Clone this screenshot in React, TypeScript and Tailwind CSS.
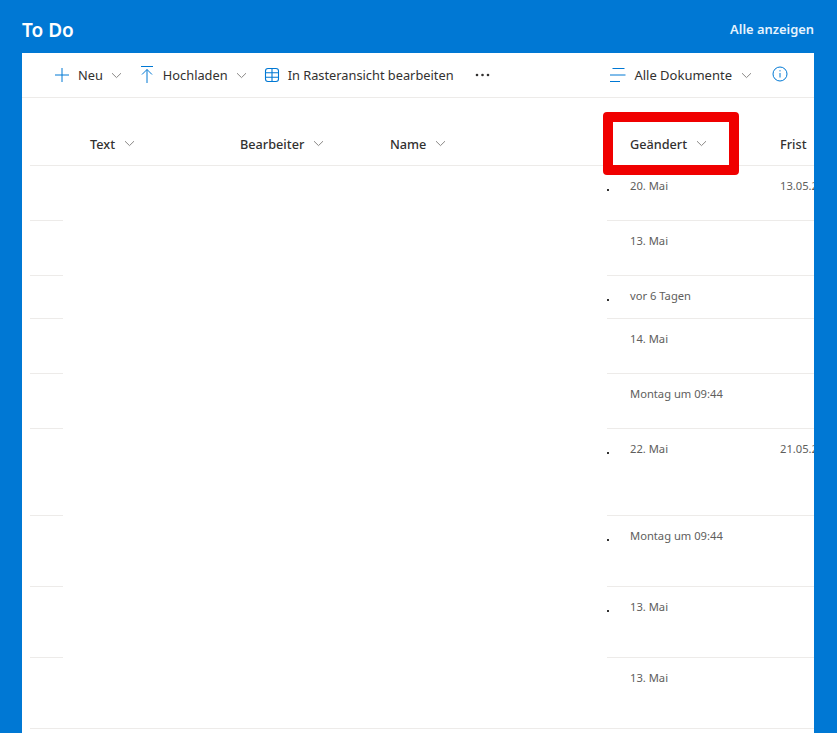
import React from "react";

const font = { fontFamily: '"Noto Sans", "Open Sans", sans-serif' };

const rows = [
  { h: "h-[55px]", date: "20. Mai", due: "13.05.2021", dot: true },
  { h: "h-[55px]", date: "13. Mai" },
  { h: "h-[43px]", date: "vor 6 Tagen", dot: true },
  { h: "h-[55px]", date: "14. Mai" },
  { h: "h-[55px]", date: "Montag um 09:44" },
  { h: "h-[87px]", date: "22. Mai", due: "21.05.2021", dot: true },
  { h: "h-[71px]", date: "Montag um 09:44", dot: true },
  { h: "h-[71px]", date: "13. Mai", dot: true },
  { h: "h-[71px]", date: "13. Mai" },
];

const Chevron = ({ className = "" }: { className?: string }) => (
  <svg width="11" height="7" viewBox="0 0 11 7" fill="none" className={className}>
    <path d="M1 1.2l4.5 4.4L10 1.2" stroke="#8a8886" strokeWidth="1" />
  </svg>
);

const HeaderCell = ({ label, className }: { label: string; className: string }) => (
  <div className={`flex items-center shrink-0 ${className}`}>
    <span className="text-[12.7px] font-medium text-[#323130]">{label}</span>
    <Chevron className="ml-[9px] mb-[3px]" />
  </div>
);

export default function App() {
  return (
    <div className="relative w-[837px] h-[735px] bg-white overflow-hidden" style={font}>
      <div className="h-[733px] bg-[#0078d4] pl-[22px] pr-[23px] flex flex-col overflow-hidden">
        {/* Title bar */}
        <div className="h-[53px] shrink-0 flex items-center justify-between pt-[7px]">
          <h1 className="text-[19px] font-semibold text-white">To Do</h1>
          <a className="text-[12.9px] font-semibold text-[#e6f3fd]">Alle anzeigen</a>
        </div>

        <div className="flex-1 bg-white flex flex-col overflow-hidden">
          {/* Command bar */}
          <div className="h-[45px] shrink-0 border-b border-[#edebe9] flex items-center text-[12.8px] text-[#323130]">
            <svg width="16" height="16" viewBox="0 0 16 16" fill="none" className="ml-[32px]" stroke="#0078d4" strokeWidth="1">
              <path d="M8 1v14M1 8h14" />
            </svg>
            <span className="ml-[8px] mt-[2px]">Neu</span>
            <Chevron className="ml-[8px]" />
            <svg width="16" height="18" viewBox="0 0 16 18" fill="none" className="ml-[17px]" stroke="#0078d4" strokeWidth="1">
              <path d="M2 0.5h12M8 17V3.5M3 8.5l5-5 5 5" />
            </svg>
            <span className="ml-[8px] mt-[2px]">Hochladen</span>
            <Chevron className="ml-[8px]" />
            <svg width="16" height="16" viewBox="0 0 16 16" fill="none" className="ml-[17px]" stroke="#0078d4" strokeWidth="1.1">
              <rect x="1.5" y="1.5" width="13" height="13" rx="2.5" />
              <path d="M1.5 5.8h13M1.5 10.2h13M8 1.5v13" />
            </svg>
            <span className="ml-[8px] mt-[2px]">In Rasteransicht bearbeiten</span>
            <svg width="15" height="4" viewBox="0 0 15 4" fill="#323130" className="ml-[21px]">
              <circle cx="2" cy="2" r="1.3" />
              <circle cx="7.5" cy="2" r="1.3" />
              <circle cx="13" cy="2" r="1.3" />
            </svg>
            <div className="ml-auto flex items-center">
              <svg width="17" height="16" viewBox="0 0 17 16" fill="none" stroke="#0078d4" strokeWidth="1">
                <path d="M3.5 1.5h12M1 8h15.5M1 14.5h10" />
              </svg>
              <span className="ml-[8px] mt-[2px] text-[13px]">Alle Dokumente</span>
              <Chevron className="ml-[9px]" />
              <svg width="16" height="16" viewBox="0 0 16 16" fill="none" className="ml-[20px] mr-[26px] mb-[2px]" stroke="#0078d4" strokeWidth="1">
                <circle cx="8" cy="8" r="7" />
                <path d="M8 7v4.5M8 4.2v1.2" />
              </svg>
            </div>
          </div>

          {/* Column headers */}
          <div className="h-[68px] shrink-0 ml-[8px] border-b border-[#edebe9] flex pt-[37px] items-start overflow-hidden whitespace-nowrap">
            <HeaderCell label="Text" className="ml-[60px] w-[150px]" />
            <HeaderCell label="Bearbeiter" className="w-[150px]" />
            <HeaderCell label="Name" className="w-[240px]" />
            <HeaderCell label="Geändert" className="w-[150px]" />
            <HeaderCell label="Frist" className="w-[40px]" />
          </div>

          {/* Rows: the middle columns are blanked out in the original */}
          {rows.map((row, i) => {
            const last = i === rows.length - 1;
            return (
              <div key={i} className={`${row.h} shrink-0 flex`}>
                <div className="ml-[8px] w-[33px] shrink-0 border-b border-[#edebe9]" />
                <div className={`w-[544px] shrink-0 ${last ? "border-b border-[#edebe9]" : ""}`} />
                <div className="flex-1 min-w-0 flex overflow-hidden whitespace-nowrap text-[11.2px] text-[#605e5c] border-b border-[#edebe9]">
                  <div className="w-[1px] shrink-0 pt-[23px]">
                    {row.dot && <div className="w-[2px] h-[2px] bg-[#333]" />}
                  </div>
                  <div className="ml-[22px] w-[150px] shrink-0 pt-[12px]">{row.date}</div>
                  <div className="pt-[12px]">{row.due}</div>
                </div>
              </div>
            );
          })}
        </div>
      </div>

      {/* Red highlight drawn over the screenshot */}
      <div className="absolute left-[603px] top-[112px] w-[136px] h-[63px] border-[10px] border-[#f00000] rounded-[4px]" />
    </div>
  );
}
